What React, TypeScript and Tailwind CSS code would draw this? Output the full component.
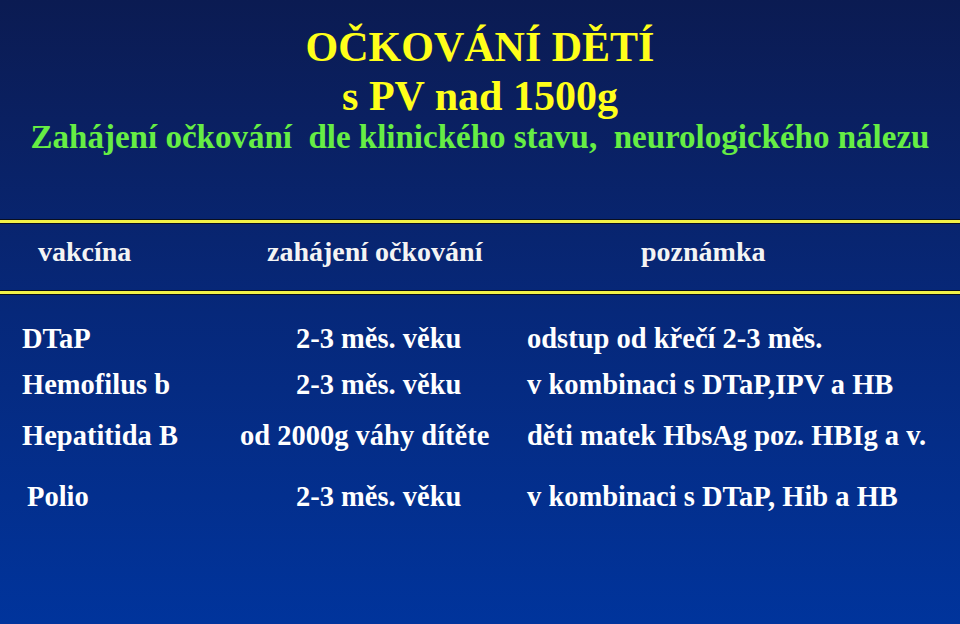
const rows = [
  { name: "DTaP", nameCls: "pl-[22px]", start: "2-3 měs. věku", startCls: "pl-[56px]", note: "odstup od křečí 2-3 měs.", h: "h-[46px]" },
  { name: "Hemofilus b", nameCls: "pl-[22px]", start: "2-3 měs. věku", startCls: "pl-[56px]", note: "v kombinaci s DTaP,IPV a HB", h: "h-[46px]" },
  { name: "Hepatitida B", nameCls: "pl-[22px]", start: "od 2000g váhy dítěte", startCls: "pl-0", note: "děti matek HbsAg poz. HBIg a v.", h: "h-[51px]" },
  { name: "Polio", nameCls: "pl-[27px]", start: "2-3 měs. věku", startCls: "pl-[56px]", note: "v kombinaci s DTaP, Hib a HB", h: "h-[61px]" },
];

function Rule() {
  return <div className="h-[5px] w-full border-y border-[#0a0f1e] bg-[#f2f247]" />;
}

export default function App() {
  return (
    <div
      className="w-[960px] h-[624px] overflow-hidden bg-gradient-to-b from-[#0b1b52] via-[#06287a] to-[#00349c] font-bold"
      style={{ fontFamily: '"Liberation Serif", "Times New Roman", serif' }}
    >
      <div className="pt-[23px] flex flex-col items-center text-[#ffff1a]">
        <div className="text-[42px] leading-[48px]">OČKOVÁNÍ DĚTÍ</div>
        <div className="text-[42px] leading-[50px]">s PV nad 1500g</div>
      </div>
      <div className="flex justify-center text-[33px] leading-[32px] text-[#66ee44] whitespace-pre">
        {"Zahájení očkování  dle klinického stavu,  neurologického nálezu"}
      </div>

      <div className="mt-[66px]">
        <Rule />
        <div className="h-[66px] pb-[10px] flex items-center text-[28px] text-[#f4f4f4]">
          <div className="w-[267px] pl-[38px]">vakcína</div>
          <div className="w-[374px]">zahájení očkování</div>
          <div>poznámka</div>
        </div>
        <Rule />
      </div>

      <div className="pt-[20px] text-[28.5px] text-white">
        {rows.map((r) => (
          <div key={r.name} className={`flex items-end ${r.h}`}>
            <div className={`w-[240px] ${r.nameCls}`}>{r.name}</div>
            <div className={`w-[287px] ${r.startCls}`}>{r.start}</div>
            <div>{r.note}</div>
          </div>
        ))}
      </div>
    </div>
  );
}
